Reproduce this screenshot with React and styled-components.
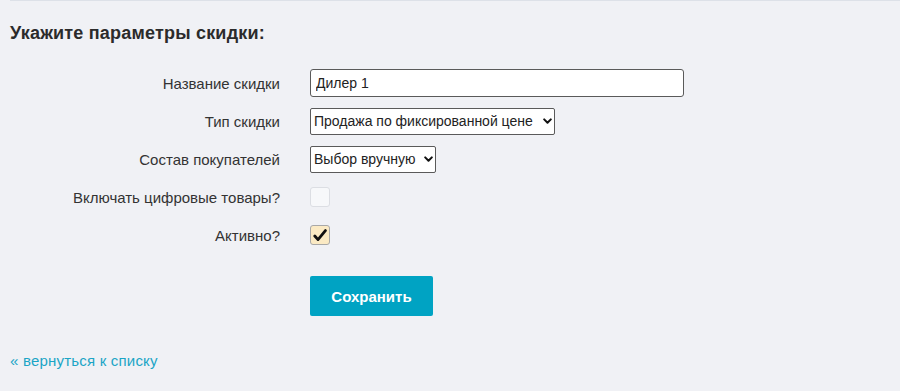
import React, { useState } from 'react';
import styled, { createGlobalStyle } from 'styled-components';

const Global = createGlobalStyle`
  html, body {
    margin: 0;
    padding: 0;
    background: #f0f1f5;
  }
  body {
    font-family: "Liberation Sans", Arial, sans-serif;
    color: #333;
  }
`

const Page = styled.div`
  width: 900px;
  height: 391px;
  box-sizing: border-box;
  padding-left: 10px;
  background: #f0f1f5;
`

const TopRule = styled.div`
  height: 1px;
  background: #dde1e8;
`

const Heading = styled.h2`
  margin: 0;
  padding-top: 22px;
  height: 41px;
  box-sizing: border-box;
  font-size: 18px;
  font-weight: bold;
  letter-spacing: 0.2px;
  color: #2b2b2b;
  line-height: 21px;
`

const Form = styled.form`
  display: grid;
  grid-template-columns: 270px 1fr;
  grid-auto-rows: minmax(38px, auto);
  column-gap: 30px;
  margin-top: 22px;
  align-items: center;
`

const Label = styled.label`
  text-align: right;
  font-size: 15px;
  color: #333;
`

const TextInput = styled.input`
  width: 374px;
  height: 28px;
  box-sizing: border-box;
  border: 1px solid #5a5a5a;
  border-radius: 3px;
  background: #fff;
  padding: 0 5px;
  font-family: "Liberation Sans", Arial, sans-serif;
  font-size: 14px;
  color: #222;
  outline: none;
`

const SelectWrap = styled.div`
  position: relative;
  width: ${p => p.$w}px;
  height: 27px;
`

const Select = styled.select`
  appearance: none;
  -webkit-appearance: none;
  width: 100%;
  height: 100%;
  box-sizing: border-box;
  border: 1px solid #5a5a5a;
  border-radius: 2px;
  background: #fff;
  padding: 0 16px 0 3px;
  font-family: "Liberation Sans", Arial, sans-serif;
  font-size: 14px;
  color: #222;
  outline: none;
`

const Chevron = styled.svg`
  position: absolute;
  right: 3px;
  top: 10px;
  pointer-events: none;
`

const Box = styled.span`
  display: inline-flex;
  align-items: center;
  justify-content: center;
  width: 20px;
  height: 20px;
  box-sizing: border-box;
  border-radius: 3px;
  border: 1px solid ${p => (p.$on ? '#a8a8a8' : '#dcdee3')};
  background: ${p => (p.$on ? '#fbeac4' : '#f7f8fa')};
  vertical-align: middle;
  cursor: pointer;
`

const ButtonRow = styled.div`
  grid-column: 2;
  padding-top: 22px;
`

const SaveButton = styled.button`
  display: block;
  width: 123px;
  height: 40px;
  border: none;
  border-radius: 2px;
  background: #00a3c3;
  color: #fff;
  font-family: "Liberation Sans", Arial, sans-serif;
  font-size: 15px;
  font-weight: bold;
  cursor: pointer;
`

const BackLink = styled.a`
  display: block;
  margin-top: 36px;
  font-size: 15px;
  letter-spacing: 0.2px;
  color: #1ba5c6;
  text-decoration: none;
`

const Check = ({ on, onClick }) => (
  <Box $on={on} onClick={onClick}>
    {on && (
      <svg width="14" height="13" viewBox="0 0 14 13">
        <path d="M1.8 7 L5 10.6 L12.4 1.6" fill="none" stroke="#111" strokeWidth="2.8" strokeLinecap="round" strokeLinejoin="round" />
      </svg>
    )}
  </Box>
)

const Arrow = () => (
  <Chevron width="9" height="7" viewBox="0 0 9 7">
    <path d="M1.2 1.4 L4.5 4.8 L7.8 1.4" fill="none" stroke="#111" strokeWidth="2" strokeLinecap="round" strokeLinejoin="round" />
  </Chevron>
)

export default function App() {
  const [digital, setDigital] = useState(false)
  const [active, setActive] = useState(true)

  return (
    <Page>
      <Global />
      <TopRule />
      <Heading>Укажите параметры скидки:</Heading>
      <Form onSubmit={e => e.preventDefault()}>
        <Label>Название скидки</Label>
        <div><TextInput defaultValue="Дилер 1" /></div>

        <Label>Тип скидки</Label>
        <SelectWrap $w={245}>
          <Select defaultValue="fixed">
            <option value="fixed">Продажа по фиксированной цене</option>
          </Select>
          <Arrow />
        </SelectWrap>

        <Label>Состав покупателей</Label>
        <SelectWrap $w={126}>
          <Select defaultValue="manual">
            <option value="manual">Выбор вручную</option>
          </Select>
          <Arrow />
        </SelectWrap>

        <Label>Включать цифровые товары?</Label>
        <div><Check on={digital} onClick={() => setDigital(!digital)} /></div>

        <Label>Активно?</Label>
        <div><Check on={active} onClick={() => setActive(!active)} /></div>

        <ButtonRow>
          <SaveButton type="submit">Сохранить</SaveButton>
        </ButtonRow>
      </Form>
      <BackLink href="#">« вернуться к списку</BackLink>
    </Page>
  )
}
